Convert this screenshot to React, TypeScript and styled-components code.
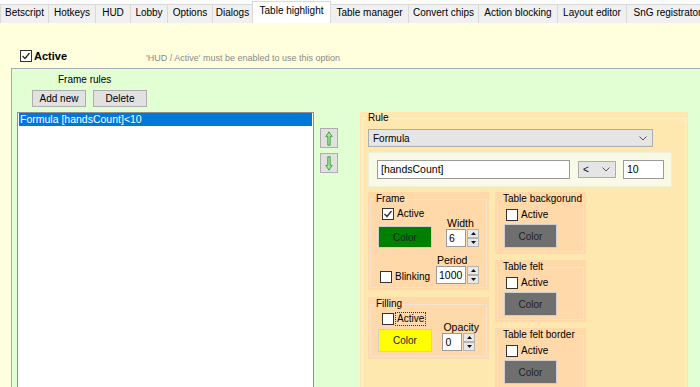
import styled, { createGlobalStyle } from "styled-components";

const GlobalStyle = createGlobalStyle`
	html, body {
		margin: 0;
		padding: 0;
	}
	body {
		font-family: "Liberation Sans", Arial, sans-serif;
		font-size: 10px;
		color: #000;
	}
`;

const Screen = styled.div`
	width: 700px;
	height: 387px;
	overflow: hidden;
	display: flex;
	flex-direction: column;
	background: #ffffdd;
`;

const TabBar = styled.div`
	display: flex;
	align-items: flex-end;
	height: 23px;
	flex-shrink: 0;
	background: #fcfcfc;
`;

const Tab = styled.div<{ $w: number; $active?: boolean }>`
	box-sizing: border-box;
	flex-shrink: 0;
	width: ${p => p.$w}px;
	height: ${p => (p.$active ? 22 : 19)}px;
	line-height: ${p => (p.$active ? 18 : 16)}px;
	border-top: 1px solid #d9d9d9;
	border-right: 1px solid #d9d9d9;
	border-left: ${p => (p.$active ? "1px solid #d9d9d9" : "none")};
	margin-left: ${p => (p.$active ? -1 : 0)}px;
	background: ${p => (p.$active ? "#ffffff" : "#f0f0f0")};
	text-align: center;
	white-space: nowrap;
	&:first-child {
		border-left: 1px solid #d9d9d9;
	}
`;

const Body = styled.div`
	flex: 1;
	min-height: 0;
	display: flex;
	flex-direction: column;
`;

const TopRow = styled.div`
	display: flex;
	align-items: center;
	height: 16px;
	margin-top: 25px;
	padding-left: 20px;
	flex-shrink: 0;
`;

const BigLabel = styled.span`
	font-size: 11px;
	font-weight: bold;
	margin-left: 2px;
`;

const Hint = styled.span`
	font-size: 9px;
	color: #8a8a8a;
	margin-left: 79px;
	align-self: flex-end;
	line-height: 12px;
`;

const GreenPanel = styled.div`
	flex: 1;
	min-height: 0;
	margin: 4px 0 0 11px;
	padding: 4px 0 0 5px;
	background: #e2ffd4;
	border-top: 1px solid #a9a9b6;
	border-left: 1px solid #a9a9b6;
	display: flex;
	flex-direction: column;
`;

const RulesCaption = styled.div`
	margin-left: 41px;
	line-height: 13px;
`;

const ButtonRow = styled.div`
	display: flex;
	gap: 7px;
	margin-top: 4px;
	padding-left: 15px;
`;

const PushButton = styled.button`
	box-sizing: border-box;
	width: 54px;
	height: 17px;
	padding: 0;
	background: #e1e1e1;
	border: 1px solid #adadad;
	font: inherit;
	color: #000;
`;

const MainRow = styled.div`
	display: flex;
	align-items: flex-start;
	margin-top: 5px;
`;

const ListBox = styled.div`
	box-sizing: border-box;
	width: 297px;
	height: 300px;
	background: #fff;
	border: 1px solid #8a8f98;
	flex-shrink: 0;
`;

const ListItem = styled.div<{ $selected?: boolean }>`
	margin: 0 1px;
	height: 13px;
	line-height: 13px;
	padding-left: 1px;
	font-size: 10.5px;
	background: ${p => (p.$selected ? "#0078d7" : "transparent")};
	color: ${p => (p.$selected ? "#fff" : "#000")};
	white-space: nowrap;
`;

const MoveCol = styled.div`
	display: flex;
	flex-direction: column;
	gap: 5px;
	margin-left: 6px;
	padding-top: 16px;
`;

const MoveButton = styled.div`
	box-sizing: border-box;
	width: 18px;
	height: 20px;
	background: #e1e1e1;
	border: 1px solid #adadad;
	display: flex;
	align-items: center;
	justify-content: center;
`;

const Box = styled.div<{ $bg: string; $w: number; $h: number; $top?: number }>`
	box-sizing: border-box;
	width: ${p => p.$w}px;
	height: ${p => p.$h}px;
	padding: ${p => p.$top ?? 1}px 2px 2px 2px;
	background: ${p => p.$bg};
	flex-shrink: 0;
`;

const Fieldset = styled.fieldset<{ $line: string }>`
	box-sizing: border-box;
	height: 100%;
	margin: 0;
	padding: 0;
	min-width: 0;
	border: 1px solid ${p => p.$line};
`;

const Legend = styled.legend`
	margin-left: 4px;
	padding: 0 1px;
	line-height: 12px;
	font-size: 10px;
	white-space: nowrap;
`;

const RuleContent = styled.div`
	padding: 5px 0 0 5px;
`;

const Combo = styled.div<{ $w: number; $h: number }>`
	box-sizing: border-box;
	width: ${p => p.$w}px;
	height: ${p => p.$h}px;
	background: #e5e5e5;
	border: 1px solid #acacac;
	display: flex;
	align-items: center;
	justify-content: space-between;
	padding: 0 5px 0 4px;
	flex-shrink: 0;
`;

const FormulaPanel = styled.div`
	box-sizing: border-box;
	width: 304px;
	height: 35px;
	margin-top: 5px;
	padding-left: 8px;
	background: #f8fae6;
	border: 1px solid #eef0d6;
	display: flex;
	align-items: center;
`;

const TextBox = styled.div<{ $w: number; $gap?: number }>`
	box-sizing: border-box;
	width: ${p => p.$w}px;
	height: 19px;
	margin-left: ${p => p.$gap ?? 0}px;
	background: #fff;
	border: 1px solid #9a9a9a;
	line-height: 17px;
	padding-left: 3px;
	font-size: 10.5px;
	flex-shrink: 0;
`;

const Columns = styled.div`
	display: flex;
	gap: 6px;
	margin-top: 5px;
`;

const Column = styled.div<{ $gap: number }>`
	display: flex;
	flex-direction: column;
	gap: ${p => p.$gap}px;
`;

const GroupBody = styled.div<{ $padRight?: number }>`
	display: flex;
	justify-content: space-between;
	padding-right: ${p => p.$padRight ?? 0}px;
`;

const LeftStack = styled.div`
	display: flex;
	flex-direction: column;
	align-items: flex-start;
`;

const RightStack = styled.div`
	display: flex;
	flex-direction: column;
	align-items: flex-end;
`;

const CheckRow = styled.div<{ $top: number; $left: number }>`
	display: flex;
	align-items: center;
	gap: 2px;
	height: 12px;
	margin-top: ${p => p.$top}px;
	margin-left: ${p => p.$left}px;
	white-space: nowrap;
`;

const CheckBox = styled.div`
	box-sizing: border-box;
	width: 12px;
	height: 12px;
	background: #fff;
	border: 1px solid #333;
	display: flex;
	align-items: center;
	justify-content: center;
	flex-shrink: 0;
`;

const CheckText = styled.span<{ $focus?: boolean }>`
	line-height: 12px;
	padding: 0 1px;
	outline: ${p => (p.$focus ? "1px dotted #333" : "none")};
`;

const ColorButton = styled.div<{ $color: string; $top: number; $left: number; $w: number; $h: number }>`
	box-sizing: border-box;
	width: ${p => p.$w}px;
	height: ${p => p.$h}px;
	margin-top: ${p => p.$top}px;
	margin-left: ${p => p.$left}px;
	background: ${p => p.$color};
	border: 1px solid #cfcfcf;
	display: flex;
	align-items: center;
	justify-content: center;
	color: #222;
`;

const FieldStack = styled.div<{ $top: number }>`
	display: flex;
	flex-direction: column;
	align-items: flex-start;
	margin-top: ${p => p.$top}px;
`;

const FieldLabel = styled.div`
	line-height: 12px;
	padding-left: 1px;
	font-size: 10.5px;
`;

const Spin = styled.div`
	display: flex;
	gap: 1px;
	height: 18px;
`;

const SpinInput = styled.div<{ $w: number }>`
	box-sizing: border-box;
	width: ${p => p.$w}px;
	height: 18px;
	background: #fff;
	border: 1px solid #9a9a9a;
	line-height: 16px;
	padding-left: 2px;
	font-size: 10.5px;
`;

const SpinButtons = styled.div`
	display: flex;
	flex-direction: column;
	width: 12px;
`;

const SpinHalf = styled.div`
	box-sizing: border-box;
	flex: 1;
	background: #e8e8e8;
	border: 1px solid #b4b4b4;
	display: flex;
	align-items: center;
	justify-content: center;
`;

const Check = () => (
	<svg width="10" height="10" viewBox="0 0 10 10">
		<path d="M1.5 5 L4 7.5 L8.5 2" fill="none" stroke="#222" strokeWidth="1.2" />
	</svg>
);

const Chevron = () => (
	<svg width="8" height="5" viewBox="0 0 8 5">
		<polyline points="0.5,0.5 4,4 7.5,0.5" fill="none" stroke="#555" strokeWidth="1" />
	</svg>
);

const Arrow = ({ down }: { down?: boolean }) => (
	<svg width="8" height="15" viewBox="0 0 8 15" style={{ transform: down ? "rotate(180deg)" : undefined }}>
		<path
			d="M4 0.8 L7.2 5.6 L5.2 5.6 L5.2 14.2 L2.8 14.2 L2.8 5.6 L0.8 5.6 Z"
			fill="#a6e4a0"
			stroke="#3c9a3c"
			strokeWidth="0.9"
		/>
	</svg>
);

const Tri = ({ down }: { down?: boolean }) => (
	<svg width="5" height="3" viewBox="0 0 5 3">
		<path d={down ? "M0 0 H5 L2.5 3 Z" : "M0 3 H5 L2.5 0 Z"} fill="#111" />
	</svg>
);

const SpinField = ({ value, w }: { value: string; w: number }) => (
	<Spin>
		<SpinInput $w={w}>{value}</SpinInput>
		<SpinButtons>
			<SpinHalf>
				<Tri />
			</SpinHalf>
			<SpinHalf>
				<Tri down />
			</SpinHalf>
		</SpinButtons>
	</Spin>
);

const Option = ({
	label,
	checked,
	focus,
	top,
	left,
}: {
	label: string;
	checked?: boolean;
	focus?: boolean;
	top: number;
	left: number;
}) => (
	<CheckRow $top={top} $left={left}>
		<CheckBox>{checked && <Check />}</CheckBox>
		<CheckText $focus={focus}>{label}</CheckText>
	</CheckRow>
);

const tabs = [
	{ name: "Betscript", w: 49 },
	{ name: "Hotkeys", w: 47 },
	{ name: "HUD", w: 35 },
	{ name: "Lobby", w: 37 },
	{ name: "Options", w: 45 },
	{ name: "Dialogs", w: 40 },
	{ name: "Table highlight", w: 79, active: true },
	{ name: "Table manager", w: 78 },
	{ name: "Convert chips", w: 70 },
	{ name: "Action blocking", w: 79 },
	{ name: "Layout editor", w: 69 },
	{ name: "SnG registrator", w: 82 },
];

const PEACH = "#ffd9aa";
const PEACH_LINE = "#f4e3cf";

const SmallGroup = ({ title }: { title: string }) => (
	<Box $bg={PEACH} $w={91} $h={62}>
		<Fieldset $line={PEACH_LINE}>
			<Legend>{title}</Legend>
			<LeftStack>
				<Option label="Active" top={4} left={8} />
				<ColorButton $color="#6f6f6f" $top={3} $left={6} $w={53} $h={24}>
					Color
				</ColorButton>
			</LeftStack>
		</Fieldset>
	</Box>
);

export default function App() {
	return (
		<Screen>
			<GlobalStyle />
			<TabBar>
				{tabs.map(t => (
					<Tab key={t.name} $w={t.w} $active={t.active}>
						{t.name}
					</Tab>
				))}
			</TabBar>
			<Body>
				<TopRow>
					<CheckBox>
						<Check />
					</CheckBox>
					<BigLabel>Active</BigLabel>
					<Hint>'HUD / Active' must be enabled to use this option</Hint>
				</TopRow>
				<GreenPanel>
					<RulesCaption>Frame rules</RulesCaption>
					<ButtonRow>
						<PushButton>Add new</PushButton>
						<PushButton>Delete</PushButton>
					</ButtonRow>
					<MainRow>
						<ListBox>
							<ListItem $selected>Formula [handsCount]&lt;10</ListItem>
						</ListBox>
						<MoveCol>
							<MoveButton>
								<Arrow />
							</MoveButton>
							<MoveButton>
								<Arrow down />
							</MoveButton>
						</MoveCol>
						<Box $bg="#ffe8b0" $w={328} $h={300} $top={0} style={{ marginLeft: 22 }}>
							<Fieldset $line="#fff0cc">
								<Legend>Rule</Legend>
								<RuleContent>
									<Combo $w={285} $h={18}>
										<span>Formula</span>
										<Chevron />
									</Combo>
									<FormulaPanel>
										<TextBox $w={193}>[handsCount]</TextBox>
										<Combo $w={38} $h={17} style={{ marginLeft: 8 }}>
											<span>&lt;</span>
											<Chevron />
										</Combo>
										<TextBox $w={41} $gap={7}>
											10
										</TextBox>
									</FormulaPanel>
									<Columns>
										<Column $gap={7}>
											<Box $bg={PEACH} $w={121} $h={98}>
												<Fieldset $line={PEACH_LINE}>
													<Legend>Frame</Legend>
													<GroupBody $padRight={7}>
														<LeftStack>
															<Option label="Active" checked top={3} left={11} />
															<ColorButton $color="#008000" $top={6} $left={7} $w={54} $h={22}>
																Color
															</ColorButton>
															<Option label="Blinking" top={23} left={9} />
														</LeftStack>
														<RightStack>
															<FieldStack $top={12}>
																<FieldLabel>Width</FieldLabel>
																<SpinField value="6" w={20} />
															</FieldStack>
															<FieldStack $top={7}>
																<FieldLabel>Period</FieldLabel>
																<SpinField value="1000" w={30} />
															</FieldStack>
														</RightStack>
													</GroupBody>
												</Fieldset>
											</Box>
											<Box $bg={PEACH} $w={121} $h={62}>
												<Fieldset $line={PEACH_LINE}>
													<Legend>Filling</Legend>
													<GroupBody $padRight={7}>
														<LeftStack>
															<Option label="Active" focus top={3} left={11} />
															<ColorButton $color="#ffff00" $top={4} $left={7} $w={54} $h={23}>
																Color
															</ColorButton>
														</LeftStack>
														<RightStack>
															<FieldStack $top={11}>
																<FieldLabel>Opacity</FieldLabel>
																<SpinField value="0" w={20} />
															</FieldStack>
														</RightStack>
													</GroupBody>
												</Fieldset>
											</Box>
										</Column>
										<Column $gap={6}>
											<SmallGroup title="Table backgorund" />
											<SmallGroup title="Table felt" />
											<SmallGroup title="Table felt border" />
										</Column>
									</Columns>
								</RuleContent>
							</Fieldset>
						</Box>
					</MainRow>
				</GreenPanel>
			</Body>
		</Screen>
	);
}
